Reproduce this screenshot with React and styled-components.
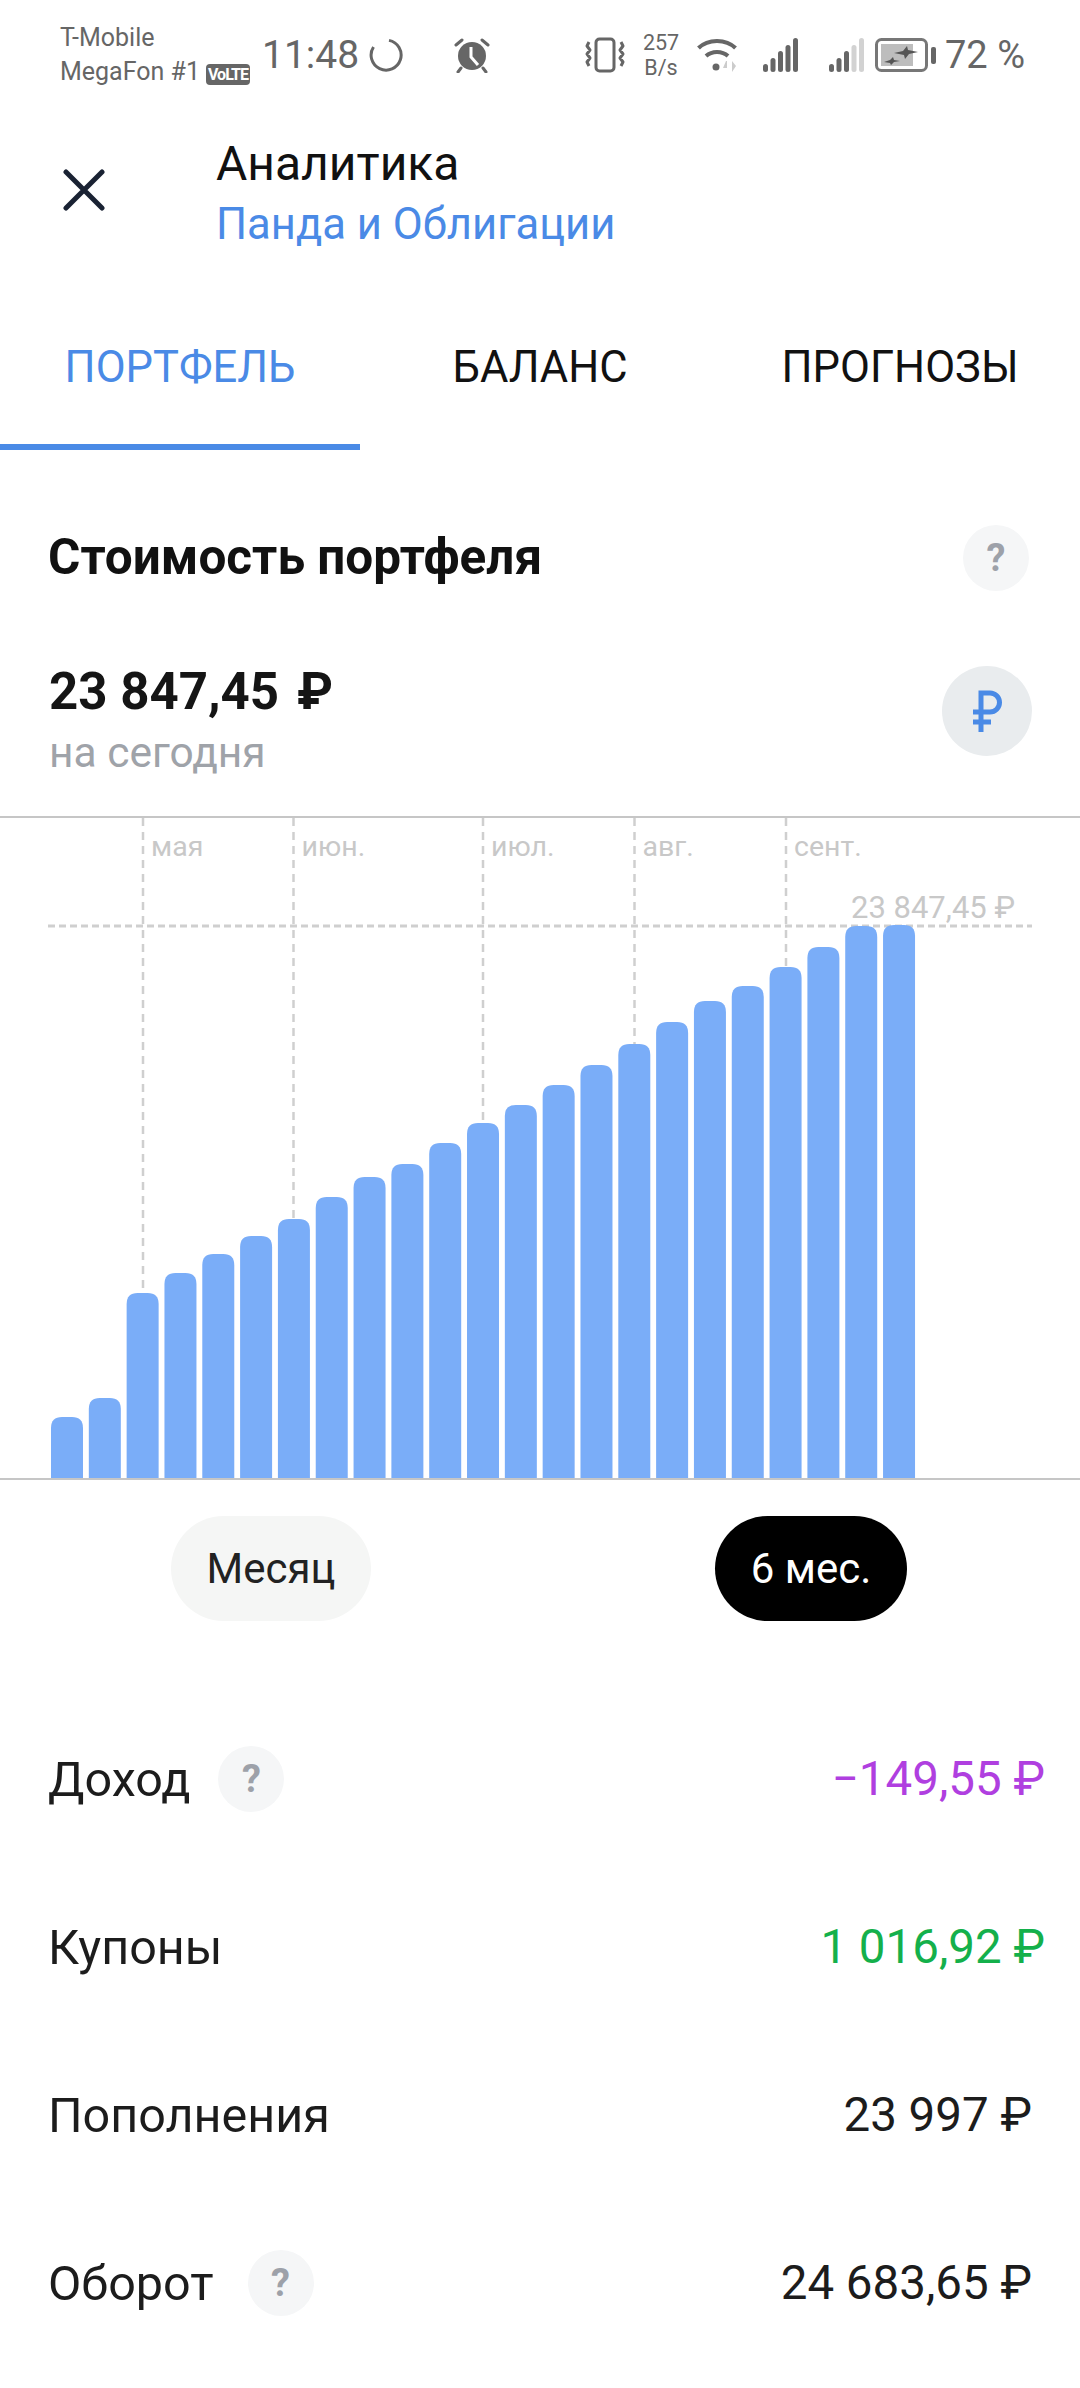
import React from 'react';
import styled, { createGlobalStyle } from 'styled-components';

const GlobalStyle = createGlobalStyle`
  html, body { margin: 0; padding: 0; background: #fff; }
  body { font-family: Roboto, "Noto Sans", sans-serif; color: #1a1a1a; }
  * { box-sizing: border-box; }
`;

const BLUE = '#4a8ae6';
const BASE = 662;
const BAR_W = 32;
const BAR_STEP = 37.82;

// bar tops, measured in page pixels
const TOPS = [1417, 1398, 1293, 1273, 1254, 1236, 1219, 1197, 1177, 1164, 1143, 1123, 1105, 1085, 1065, 1044, 1022, 1001, 986, 967, 947, 926, 925];

const MONTHS = [
  { x: 143, label: 'мая' },
  { x: 293.5, label: 'июн.' },
  { x: 483, label: 'июл.' },
  { x: 634.5, label: 'авг.' },
  { x: 786, label: 'сент.' },
];

const ROWS = [
  { label: 'Доход', help: true, value: '−149,55 ₽', color: '#b03fe0', shift: true, gap: 28 },
  { label: 'Купоны', value: '1 016,92 ₽', color: '#14b04b', shift: true },
  { label: 'Пополнения', value: '23 997 ₽' },
  { label: 'Оборот', help: true, value: '24 683,65 ₽', gap: 34 },
];

const Page = styled.div`
  width: 1080px;
  min-height: 2388px;
  background: #fff;
  overflow: hidden;
`;

const StatusBar = styled.div`
  height: 110px;
  padding: 0 55px 0 60px;
  display: flex;
  align-items: center;
  color: #666;
`;

const Carrier = styled.div`
  font-size: 25px;
  line-height: 34px;
  width: 200px;
  white-space: nowrap;
`;

const Volte = styled.span`
  display: inline-block;
  margin-left: 6px;
  padding: 0 2px;
  height: 21px;
  line-height: 21px;
  border-radius: 4px;
  background: #666;
  color: #fff;
  font-size: 16px;
  font-weight: 700;
  letter-spacing: -1px;
  vertical-align: 0;
`;

const Time = styled.div`
  font-size: 39px;
  margin-left: 2px;
  margin-right: 10px;
`;

const StatusIcon = styled.svg`
  display: block;
  flex: none;
  margin-left: ${(p) => p.$gap || 0}px;
`;

const Speed = styled.div`
  margin-left: 16px;
  width: 40px;
  font-size: 21.5px;
  line-height: 25.2px;
  text-align: center;
`;

const Percent = styled.div`
  font-size: 38px;
  margin-left: 9px;
  white-space: nowrap;
`;

const Spacer = styled.div`
  flex: 1;
`;

const Header = styled.div`
  height: 174px;
  display: flex;
  align-items: flex-start;
`;

const CloseBox = styled.div`
  width: 216px;
  padding: 59px 0 0 63px;
`;

const TitleBlock = styled.div`
  padding-top: 27px;
`;

const Title = styled.div`
  font-size: 48px;
  line-height: 54px;
  color: #111;
`;

const Subtitle = styled.div`
  font-size: 43.6px;
  line-height: 54px;
  margin-top: 7px;
  color: ${BLUE};
`;

const Tabs = styled.div`
  display: grid;
  grid-template-columns: repeat(3, 360px);
`;

const Tab = styled.div`
  height: 166px;
  display: flex;
  align-items: center;
  justify-content: center;
  font-size: 43.5px;
  color: ${(p) => (p.$active ? BLUE : '#111')};
  border-bottom: 6px solid ${(p) => (p.$active ? BLUE : 'transparent')};
  padding-top: 6px;
`;

const SectionHead = styled.div`
  margin-top: 75px;
  padding: 0 51px 0 48px;
  display: flex;
  align-items: center;
  justify-content: space-between;
`;

const SectionTitle = styled.div`
  font-size: 49.5px;
  line-height: 62px;
  font-weight: 700;
  color: #111;
  padding-bottom: 2px;
`;

const Help = styled.div`
  width: 66px;
  height: 66px;
  flex: none;
  border-radius: 50%;
  background: #f5f6f7;
  color: #9da1a9;
  font-size: 38px;
  font-weight: 700;
  display: flex;
  align-items: center;
  justify-content: center;
`;

const Balance = styled.div`
  margin-top: 75px;
  padding: 0 48px 0 49px;
  height: 90px;
  display: flex;
  align-items: center;
  justify-content: space-between;
`;

const BalanceText = styled.div`
  padding-top: 24px;
`;

const Amount = styled.div`
  font-size: 51px;
  line-height: 60px;
  font-weight: 700;
  color: #151515;
`;

const AmountSign = styled.span`
  margin-left: 18px;
`;

const AmountNote = styled.div`
  font-size: 42.5px;
  line-height: 62px;
  color: #9fa3a9;
`;

const CurrencyBadge = styled.div`
  width: 90px;
  height: 90px;
  border-radius: 50%;
  background: #e9ecee;
  display: flex;
  align-items: center;
  justify-content: center;
`;

const ChartSvg = styled.svg`
  display: block;
  margin-top: 60px;
`;

const MonthLabel = styled.text`
  font-size: ${(p) => p.$size || 28.5}px;
  fill: #c8c8c8;
`;

const Periods = styled.div`
  margin-top: 36px;
  display: grid;
  grid-template-columns: 542px 538px;
  justify-items: center;
`;

const Period = styled.div`
  height: 105px;
  padding: 0 36px;
  border-radius: 53px;
  font-size: 42px;
  display: flex;
  align-items: center;
  background: ${(p) => (p.$active ? '#000' : '#f5f6f5')};
  color: ${(p) => (p.$active ? '#fff' : '#222')};
`;

const Stats = styled.div`
  margin-top: 74px;
`;

const StatRow = styled.div`
  height: 168px;
  padding: 0 48px;
  display: flex;
  align-items: center;
  justify-content: space-between;
`;

const StatLabel = styled.div`
  display: flex;
  align-items: center;
  gap: ${(p) => p.$gap || 0}px;
  font-size: 48.5px;
  color: #1c1c1c;
`;

const StatValue = styled.div`
  font-size: 47.5px;
  color: ${(p) => p.$color || '#1c1c1c'};
  margin-right: ${(p) => (p.$shift ? -13 : 0)}px;
`;

const barPath = (top, i) => {
  const x = 51 + i * BAR_STEP;
  const y = top - 816;
  const r = 11;
  return `M${x} ${BASE}V${y + r}Q${x} ${y} ${x + r} ${y}H${x + BAR_W - r}Q${x + BAR_W} ${y} ${x + BAR_W} ${y + r}V${BASE}Z`;
};

const Chart = () => (
  <ChartSvg width="1080" height="664" viewBox="0 0 1080 664">
    <rect x="0" y="0" width="1080" height="2" fill="#c6c6c6" />
    <rect x="0" y={BASE} width="1080" height="2" fill="#c6c6c6" />
    {MONTHS.map((m) => (
      <g key={m.label}>
        <line x1={m.x} x2={m.x} y1="2" y2={BASE} stroke="#cfcfcf" strokeWidth="2.5" strokeDasharray="8 6" />
        <MonthLabel x={m.x + 8} y="40">{m.label}</MonthLabel>
      </g>
    ))}
    <line x1="48" x2="1032" y1="110" y2="110" stroke="#cfcfcf" strokeWidth="3" strokeDasharray="7 4" />
    <MonthLabel $size={31} x="1015" y="102" textAnchor="end">23 847,45 ₽</MonthLabel>
    {TOPS.map((t, i) => (
      <path key={i} d={barPath(t, i)} fill="#7aadf8" />
    ))}
  </ChartSvg>
);

const Spinner = () => (
  <StatusIcon $gap={0} width="34" height="34" viewBox="0 0 34 34" fill="none" stroke="#666" strokeWidth="3">
    <path d="M20 2.4A15 15 0 1 1 4.5 9" />
  </StatusIcon>
);

const Alarm = () => (
  <StatusIcon $gap={50} width="38" height="36" viewBox="0 0 38 36" fill="#666">
    <circle cx="19" cy="19" r="14" />
    <path d="M3 8l6-5M35 8l-6-5M8 31l-3 4M30 31l3 4" stroke="#666" strokeWidth="3" strokeLinecap="round" />
    <path d="M18 10v10l7 8" stroke="#fff" strokeWidth="3" fill="none" />
  </StatusIcon>
);

const Vibrate = () => (
  <StatusIcon width="40" height="36" viewBox="0 0 40 36" fill="none" stroke="#666" strokeWidth="3">
    <rect x="11" y="2" width="18" height="32" rx="3.5" />
    <path d="M4 5l-2 4 3 4-3 4 3 4-3 4 2 4M36 5l2 4-3 4 3 4-3 4 3 4-2 4" strokeLinejoin="round" />
  </StatusIcon>
);

const Wifi = () => (
  <StatusIcon $gap={16} width="42" height="36" viewBox="0 0 42 36" fill="none" stroke="#666" strokeWidth="4">
    <path d="M1.5 11C11 1.5 29 1.5 38.5 11" />
    <path d="M9 19C15 13.5 25 13.5 31 19" />
    <circle cx="19" cy="30" r="3.5" fill="#666" stroke="none" />
    <path d="M29 24l-3 7h4v-7zM35 24v11l4-6z" fill="#ccc" stroke="none" />
  </StatusIcon>
);

const Signal = ({ gap, dim }) => (
  <StatusIcon $gap={gap} width="36" height="34" viewBox="0 0 36 34">
    {[
      [0, 26, 8],
      [7.5, 20, 14],
      [15, 13, 21],
      [22.5, 7, 27],
      [30, 0, 34],
    ].map(([x, y, h], i) => (
      <rect key={i} x={x} y={y} width="5" height={h} rx="2.5" fill={i >= 5 - dim ? '#d2d2d2' : '#666'} />
    ))}
  </StatusIcon>
);

const Battery = () => (
  <StatusIcon $gap={10} width="61" height="34" viewBox="0 0 61 34">
    <rect x="1.5" y="1.5" width="50" height="31" rx="5" fill="none" stroke="#777" strokeWidth="3" />
    <rect x="6" y="6" width="32" height="22" fill="#bdbdbd" />
    <path d="M19 15l9-2 4-5 1 4 10 2-9 2-4 5-1-4zM9 24l6-2 3-3 1 3 6 1-6 1-3 3-1-2z" fill="#555" />
    <rect x="56" y="9" width="5" height="17" rx="2" fill="#666" />
  </StatusIcon>
);

const App = () => (
  <Page>
    <GlobalStyle />
    <StatusBar>
      <Carrier>
        T-Mobile
        <br />
        MegaFon #1<Volte>VoLTE</Volte>
      </Carrier>
      <Time>11:48</Time>
      <Spinner />
      <Alarm />
      <Spacer />
      <Vibrate />
      <Speed>257<br />B/s</Speed>
      <Wifi />
      <Signal gap={24} dim={0} />
      <Signal gap={30} dim={2} />
      <Battery />
      <Percent>72 %</Percent>
    </StatusBar>

    <Header>
      <CloseBox>
        <svg width="42" height="42" viewBox="0 0 42 42" fill="none" stroke="#1a2233" strokeWidth="5" strokeLinecap="round">
          <path d="M3 3l36 36M39 3L3 39" />
        </svg>
      </CloseBox>
      <TitleBlock>
        <Title>Аналитика</Title>
        <Subtitle>Панда и Облигации</Subtitle>
      </TitleBlock>
    </Header>

    <Tabs>
      <Tab $active>ПОРТФЕЛЬ</Tab>
      <Tab>БАЛАНС</Tab>
      <Tab>ПРОГНОЗЫ</Tab>
    </Tabs>

    <SectionHead>
      <SectionTitle>Стоимость портфеля</SectionTitle>
      <Help>?</Help>
    </SectionHead>

    <Balance>
      <BalanceText>
        <Amount>23 847,45<AmountSign>₽</AmountSign></Amount>
        <AmountNote>на сегодня</AmountNote>
      </BalanceText>
      <CurrencyBadge>
        <svg width="30" height="42" viewBox="0 0 30 42" fill="none" stroke={BLUE} strokeWidth="5">
          <path d="M9 42V3h9a9.5 9.5 0 0 1 0 19H1M1 32h18" />
        </svg>
      </CurrencyBadge>
    </Balance>

    <Chart />

    <Periods>
      <Period>Месяц</Period>
      <Period $active>6 мес.</Period>
    </Periods>

    <Stats>
      {ROWS.map((r) => (
        <StatRow key={r.label}>
          <StatLabel $gap={r.gap}>
            {r.label}
            {r.help && <Help>?</Help>}
          </StatLabel>
          <StatValue $color={r.color} $shift={r.shift}>{r.value}</StatValue>
        </StatRow>
      ))}
    </Stats>
  </Page>
);

export default App;
